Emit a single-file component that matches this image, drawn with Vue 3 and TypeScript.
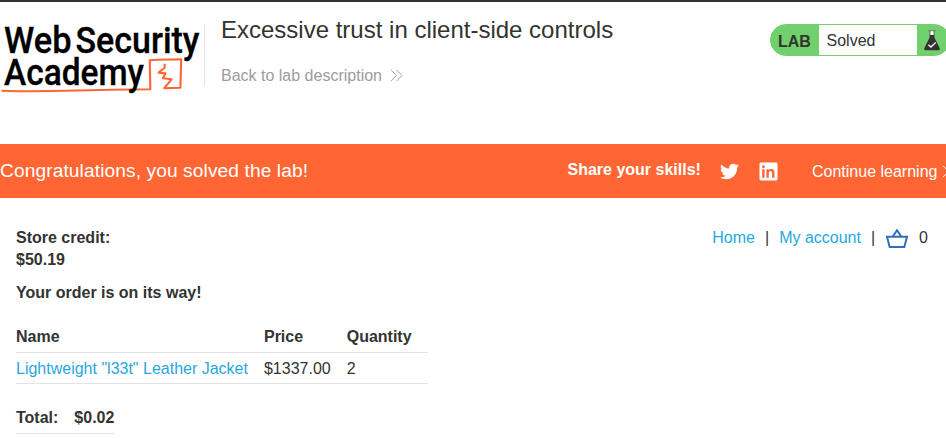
<script setup lang="ts">
interface OrderLine {
  name: string
  price: string
  quantity: number
}

const storeCredit = '$50.19'
const orderLines: OrderLine[] = [
  { name: 'Lightweight "l33t" Leather Jacket', price: '$1337.00', quantity: 2 },
]
const total = '$0.02'
const basketCount = 0
</script>

<template>
  <div class="page">
    <header class="lab-header">
      <svg class="logo" width="204" height="76" viewBox="0 22 204 76">
        <path
          d="M1.500 90.700 C25 91.600 45 91.400 65 90.800 S115 89.300 150.300 89.200 L149.800 60.200 C159 59.400 171 59.600 181.200 59.400 L180.400 87.800 L164.200 88.200 L171.600 79.300 L163 78.300 L165.500 73.400 L158.600 72.600 L164.600 67.800 L164.700 63.800"
          fill="none"
          stroke="#ff6633"
          stroke-width="2.1"
          stroke-linejoin="round"
        />
        <g class="logo-text">
          <text x="4" y="52.500" textLength="67.500" lengthAdjust="spacingAndGlyphs">Web</text>
          <text x="75.500" y="52.500" textLength="124" lengthAdjust="spacingAndGlyphs">Security</text>
          <text x="4" y="85.300" textLength="140" lengthAdjust="spacingAndGlyphs">Academy</text>
        </g>
      </svg>
      <div class="title-block">
        <h2>Excessive trust in client-side controls</h2>
        <a class="back-link">
          <span>Back to lab description</span>
          <svg width="13" height="13" viewBox="0 0 13 13">
            <path d="M1 .8 6.300 6.500 1 12.200M6.500 .8 11.800 6.500 6.500 12.200" fill="none" stroke="#9c9c9b" stroke-width=".9" />
          </svg>
        </a>
      </div>
      <div class="status">
        <span class="status-label">LAB</span>
        <p class="status-value">Solved</p>
        <span class="status-icon">
          <svg width="18" height="22" viewBox="0 0 18 22">
            <path d="M7 .5h4v6H7z" fill="#fff" />
            <path d="M5.500 .7H12.500M7 1V6M11 1V6" fill="none" stroke="#555553" stroke-width=".8" />
            <path d="M6.700 5h4.600v2.200l5.300 10.900q.9 2.200-1.500 2.200H2.900q-2.400 0-1.500-2.200L6.700 7.200z" fill="#333332" />
            <path d="M5.400 14.700 8 17 12.800 12.400" fill="none" stroke="#fff" stroke-width="1.300" />
          </svg>
        </span>
      </div>
    </header>

    <section class="banner">
      <h4>Congratulations, you solved the lab!</h4>
      <div class="share">
        <span class="share-label">Share your skills!</span>
        <svg class="twitter" width="19" height="19" viewBox="0 0 24 24">
          <path fill="#fff" d="M23.953 4.57a10 10 0 01-2.825.775 4.958 4.958 0 002.163-2.723c-.951.555-2.005.959-3.127 1.184a4.92 4.92 0 00-8.384 4.482C7.69 8.095 4.067 6.13 1.64 3.162a4.822 4.822 0 00-.666 2.475c0 1.71.87 3.213 2.188 4.096a4.904 4.904 0 01-2.228-.616v.06a4.923 4.923 0 003.946 4.827 4.996 4.996 0 01-2.212.085 4.936 4.936 0 004.604 3.417 9.867 9.867 0 01-6.102 2.105c-.39 0-.779-.023-1.17-.067a13.995 13.995 0 007.557 2.209c9.053 0 13.998-7.496 13.998-13.985 0-.21 0-.42-.015-.63A9.935 9.935 0 0024 4.590z" />
        </svg>
        <svg class="linkedin" width="19" height="19" viewBox="0 0 19 19">
          <rect x=".5" y=".5" width="18" height="18" rx="1.400" fill="#fff" />
          <path fill="#ff6633" d="M3.200 7.300h2.400v8.400H3.200zM7.400 7.300h2.300v1.200c.6-1 1.500-1.400 2.600-1.400 2.700 0 3.200 1.700 3.200 4v4.600h-2.400v-4.200c0-1.300-.2-2.400-1.600-2.400s-1.700 1-1.700 2.300v4.300H7.400z" />
          <circle cx="4.400" cy="4.700" r="1.450" fill="#ff6633" />
        </svg>
        <a class="continue">
          <span>Continue learning</span>
          <svg width="13" height="13" viewBox="0 0 13 13">
            <path d="M1 .8 6.300 6.500 1 12.200M6.500 .8 11.800 6.500 6.500 12.200" fill="none" stroke="#fff" stroke-width="1" />
          </svg>
        </a>
      </div>
    </section>

    <main class="content">
      <div class="order">
        <p class="credit"><strong>Store credit:<br />{{ storeCredit }}</strong></p>
        <p class="notice"><strong>Your order is on its way!</strong></p>
        <table class="lines">
          <thead>
            <tr><th>Name</th><th>Price</th><th>Quantity</th></tr>
          </thead>
          <tbody>
            <tr v-for="line in orderLines" :key="line.name">
              <td><a>{{ line.name }}</a></td>
              <td>{{ line.price }}</td>
              <td>{{ line.quantity }}</td>
            </tr>
          </tbody>
        </table>
        <table class="total">
          <tbody>
            <tr><th>Total:</th><th>{{ total }}</th></tr>
          </tbody>
        </table>
      </div>
      <nav class="links">
        <a>Home</a>
        <span class="sep">|</span>
        <a>My account</a>
        <span class="sep">|</span>
        <svg class="basket" width="24" height="21" viewBox="0 0 24 21">
          <path d="M2 8.800H22L19.300 19H4.700zM7.600 8.800 12 2.200 16.400 8.800" fill="none" stroke="#2b70b8" stroke-width="2" />
        </svg>
        <span class="count">{{ basketCount }}</span>
      </nav>
    </main>
  </div>
</template>

<style>
body {
  background: #fff;
  overflow: hidden;
}
</style>

<style scoped>
.page {
  box-sizing: border-box;
  width: 946px;
  height: 438px;
  overflow: hidden;
  border-top: 2px solid #333332;
  color: #333332;
  font: 16px/22px "Liberation Sans", Arial, sans-serif;
}
h2, h4, p {
  margin: 0;
  font-weight: 400;
}
.lab-header {
  display: flex;
  align-items: flex-start;
  height: 142px;
}
.logo {
  flex: none;
  margin-top: 20px;
  overflow: visible;
}
.logo-text {
  font-family: Roboto, sans-serif;
  font-size: 36.5px;
  font-weight: 500;
  fill: #000;
  stroke: #000;
  stroke-width: 0.3px;
}
.title-block {
  height: 62px;
  margin-top: 22px;
  padding-left: 16px;
  border-left: 1px solid #e4e4e4;
}
h2 {
  margin-top: -10px;
  font-size: 24px;
  line-height: 32px;
  white-space: nowrap;
}
.back-link {
  display: flex;
  align-items: center;
  gap: 8px;
  margin-top: 19px;
  color: #9c9c9b;
}
.back-link svg {
  margin-top: -2px;
}
.status {
  box-sizing: border-box;
  flex: none;
  display: flex;
  width: 180px;
  height: 32px;
  margin: 22px -4px 0 auto;
  border: 1px solid #70d06b;
  border-radius: 16px;
  background: #70d06b;
  line-height: 32px;
}
.status-label {
  width: 48px;
  padding-left: 7px;
  box-sizing: border-box;
  line-height: 33px;
  font-weight: 700;
}
.status-value {
  box-sizing: border-box;
  width: 98px;
  padding-left: 7.5px;
  background: #fff;
}
.status-icon {
  padding: 5px 0 0 6px;
  line-height: 0;
}
.banner {
  display: flex;
  justify-content: space-between;
  height: 54px;
  background: #ff6633;
  color: #fff;
}
h4 {
  font-size: 19.2px;
  letter-spacing: 0.085px;
  line-height: 53px;
}
.share {
  flex: none;
  display: flex;
  align-items: center;
  width: 378.5px;
  white-space: nowrap;
}
.share-label {
  width: 152.5px;
  flex: none;
  margin-top: -3px;
  font-weight: 700;
}
.twitter {
  flex: none;
}
.linkedin {
  flex: none;
  margin: 1px 34px 0 20px;
}
.continue {
  display: flex;
  align-items: center;
  gap: 5px;
  margin-top: 2px;
}
.continue svg {
  margin-top: -2px;
}
.content {
  display: flex;
  justify-content: space-between;
  align-items: flex-start;
  padding: 29px 18px 0 16px;
}
.credit {
  margin-bottom: 11px;
}
table {
  border-collapse: collapse;
}
th, td {
  padding: 4px 16px 4px 0;
  border-bottom: 1px solid #e4e4e4;
  text-align: left;
}
td {
  padding-top: 5px;
  padding-bottom: 3px;
}
.lines {
  margin-top: 18px;
}
.total {
  margin-top: 19px;
}
.total th:last-child {
  padding-right: 0;
}
.content a {
  color: #29a7df;
}
.links {
  display: flex;
  align-items: center;
}
.sep {
  margin: 0 10px;
}
.basket {
  margin-right: 10px;
}
</style>
